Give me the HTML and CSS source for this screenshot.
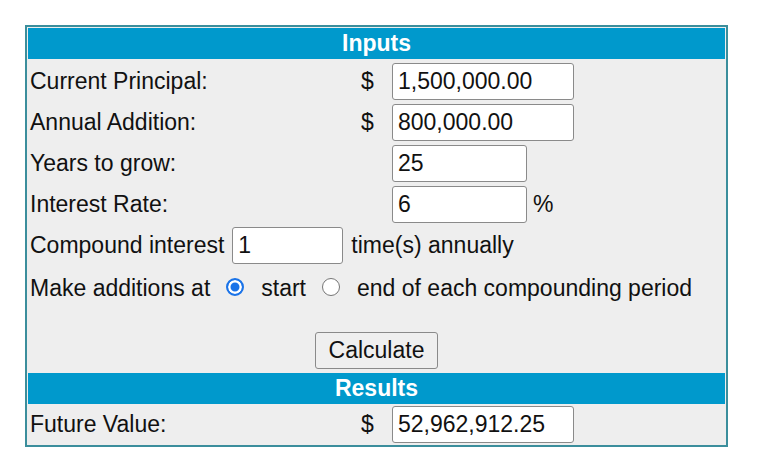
FILE: index.html
```html
<!DOCTYPE html>
<html lang="en">
<head>
  <meta charset="UTF-8">
  <title>Compound Interest Calculator</title>
  <link rel="stylesheet" href="styles.css">
</head>
<body>

  <div class="calc">
    <div class="section-head">Inputs</div>

    <div class="row">
      <span class="label">Current Principal:</span>
      <span class="cur">$</span>
      <span class="val"><input type="text" class="wide" value="1,500,000.00"></span>
    </div>
    <div class="row">
      <span class="label">Annual Addition:</span>
      <span class="cur">$</span>
      <span class="val"><input type="text" class="wide" value="800,000.00"></span>
    </div>
    <div class="row">
      <span class="label">Years to grow:</span>
      <span class="cur"></span>
      <span class="val"><input type="text" class="mid" value="25"></span>
    </div>
    <div class="row">
      <span class="label">Interest Rate:</span>
      <span class="cur"></span>
      <span class="val"><input type="text" class="mid" value="6"><span class="pct">%</span></span>
    </div>

    <div class="line compound">
      <span>Compound interest</span>
      <input type="text" class="small" value="1">
      <span>time(s) annually</span>
    </div>
    <div class="line additions">
      <span>Make additions at</span>
      <span class="radio checked"></span>
      <span>start</span>
      <span class="radio"></span>
      <span>end of each compounding period</span>
    </div>

    <div class="actions">
      <button type="button">Calculate</button>
    </div>

    <div class="section-head results-head">Results</div>
    <div class="row last">
      <span class="label">Future Value:</span>
      <span class="cur">$</span>
      <span class="val"><input type="text" class="wide" value="52,962,912.25"></span>
    </div>
  </div>

</body>
</html>
```

FILE: styles.css
```css
body {
  margin: 0;
  padding: 25px 0 0 25px;
  background: #fff;
  font-family: "Liberation Sans", Arial, sans-serif;
  font-size: 23px;
  color: #111;
}

.calc {
  width: 703px;
  box-sizing: border-box;
  border: 2px solid #3b8e9c;
  padding: 1px;
  background: #eeeeee;
}

.section-head {
  height: 31px;
  line-height: 31px;
  background: #0099cc;
  color: #fff;
  font-weight: bold;
  text-align: center;
  margin-bottom: 2px;
}

.results-head {
  margin-bottom: 1px;
}

.row {
  display: grid;
  grid-template-columns: 331px 33px 1fr;
  align-items: center;
  height: 41px;
}

.row.last {
  height: 39px;
}

.label {
  padding-left: 2px;
}

.cur {
  padding-left: 2px;
}

.val {
  display: flex;
  align-items: center;
}

.pct {
  margin-left: 6px;
}

input[type="text"] {
  height: 37px;
  box-sizing: border-box;
  border: 1px solid #8a8a8a;
  border-radius: 3px;
  padding: 0 5px;
  margin: 0;
  background: #fff;
  font-family: inherit;
  font-size: 23px;
  color: #111;
}

.wide {
  width: 182px;
}

.mid {
  width: 135px;
}

.small {
  width: 111px;
}

.line {
  display: flex;
  align-items: center;
  height: 41px;
  padding-left: 2px;
  white-space: nowrap;
}

.compound {
  gap: 8px;
}

.additions {
  padding-top: 3px;
  box-sizing: border-box;
}

.radio {
  flex: 0 0 18px;
  width: 18px;
  height: 18px;
  box-sizing: border-box;
  margin: -3px 17px 0 16px;
  border: 1.5px solid #767676;
  border-radius: 50%;
  background: #fff;
}

.radio.checked {
  border: 2.5px solid #1a73e8;
  background: #1a73e8;
  box-shadow: inset 0 0 0 2.5px #fff;
}

.actions {
  height: 66px;
  box-sizing: border-box;
  padding-top: 25px;
  text-align: center;
}

.actions button {
  width: 123px;
  height: 37px;
  background: #efefef;
  border: 1px solid #8a8a8a;
  border-radius: 3px;
  font-family: inherit;
  font-size: 23px;
  color: #111;
  padding: 0;
}
```
